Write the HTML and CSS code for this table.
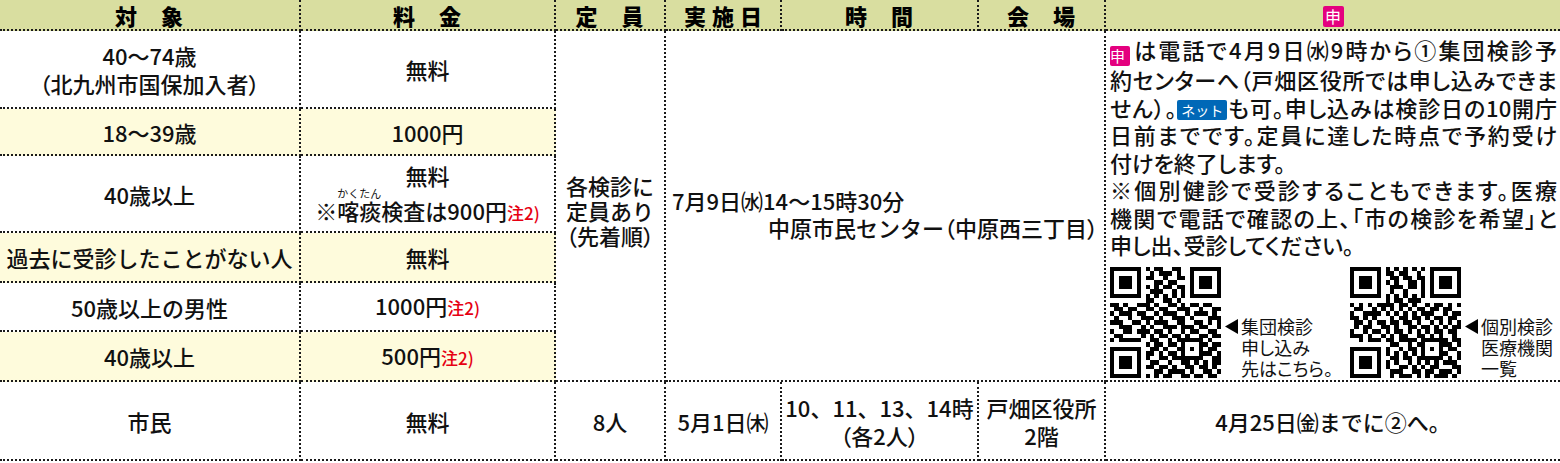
FILE: index.html
```html
<!DOCTYPE html>
<html lang="ja">
<head>
<meta charset="utf-8">
<title>検診日程</title>
<link rel="stylesheet" href="styles.css">
</head>
<body>
<div class="tbl">
  <div class="c h"><div class="t">対　象</div></div>
  <div class="c h"><div class="t">料　金</div></div>
  <div class="c h"><div class="t">定　員</div></div>
  <div class="c h wide"><div class="t">実施日</div></div>
  <div class="c h"><div class="t">時　間</div></div>
  <div class="c h"><div class="t">会　場</div></div>
  <div class="c h last"><div class="t"><span class="ic hic">申</span></div></div>

  <div class="c"><div class="t">40〜74歳<br><span class="pl">（</span>北九州市国保加入者<span class="pl">）</span></div></div>
  <div class="c"><div class="t">無料</div></div>
  <div class="c cap-cell"><div class="t">各検診に<br>定員あり<br><span class="pl">（</span>先着順<span class="pl">）</span></div></div>
  <div class="c date-cell">
    <div class="l1">7月9日㈬14〜15時30分</div>
    <div class="l2">中原市民センター<span class="pl">（</span>中原西三丁目<span class="pl">）</span></div>
  </div>
  <div class="c last info">
    <div class="j"><span class="ic">申</span>は電話で4月9日㈬9時から①集団検診予</div>
    <div class="j">約センターへ（戸畑区役所では申し込みできま</div>
    <div class="j">せん）。<span class="net">ネット</span>も可。申し込みは検診日の10開庁</div>
    <div class="j">日前までです。定員に達した時点で予約受け</div>
    <div>付けを終了します。</div>
    <div class="j">※個別健診で受診することもできます。医療</div>
    <div class="j">機関で電話で確認の上、「市の検診を希望」と</div>
    <div>申し出、受診してください。</div>
    <div class="qrs">
      <div class="qi qi1">
        <svg class="qr" viewBox="0 0 25 25" shape-rendering="crispEdges"><path id="qrp" d="M0 0h7v1h-7zM8 0h1v1h-1zM10 0h2v1h-2zM14 0h2v1h-2zM18 0h7v1h-7zM0 1h1v1h-1zM6 1h1v1h-1zM9 1h1v1h-1zM11 1h3v1h-3zM15 1h1v1h-1zM18 1h1v1h-1zM24 1h1v1h-1zM0 2h1v1h-1zM2 2h3v1h-3zM6 2h1v1h-1zM8 2h2v1h-2zM12 2h1v1h-1zM15 2h2v1h-2zM18 2h1v1h-1zM20 2h3v1h-3zM24 2h1v1h-1zM0 3h1v1h-1zM2 3h3v1h-3zM6 3h1v1h-1zM10 3h2v1h-2zM13 3h2v1h-2zM18 3h1v1h-1zM20 3h3v1h-3zM24 3h1v1h-1zM0 4h1v1h-1zM2 4h3v1h-3zM6 4h1v1h-1zM8 4h1v1h-1zM10 4h1v1h-1zM12 4h2v1h-2zM15 4h2v1h-2zM18 4h1v1h-1zM20 4h3v1h-3zM24 4h1v1h-1zM0 5h1v1h-1zM6 5h1v1h-1zM9 5h3v1h-3zM14 5h1v1h-1zM16 5h1v1h-1zM18 5h1v1h-1zM24 5h1v1h-1zM0 6h7v1h-7zM8 6h1v1h-1zM10 6h1v1h-1zM12 6h1v1h-1zM14 6h1v1h-1zM16 6h1v1h-1zM18 6h7v1h-7zM8 7h2v1h-2zM12 7h2v1h-2zM15 7h1v1h-1zM0 8h2v1h-2zM3 8h1v1h-1zM6 8h3v1h-3zM10 8h1v1h-1zM13 8h2v1h-2zM16 8h1v1h-1zM18 8h2v1h-2zM21 8h2v1h-2zM1 9h2v1h-2zM4 9h2v1h-2zM8 9h2v1h-2zM11 9h2v1h-2zM15 9h3v1h-3zM20 9h1v1h-1zM23 9h2v1h-2zM0 10h1v1h-1zM2 10h3v1h-3zM6 10h2v1h-2zM10 10h1v1h-1zM12 10h3v1h-3zM17 10h1v1h-1zM19 10h3v1h-3zM23 10h1v1h-1zM1 11h1v1h-1zM4 11h1v1h-1zM7 11h3v1h-3zM11 11h1v1h-1zM14 11h3v1h-3zM18 11h1v1h-1zM22 11h3v1h-3zM0 12h3v1h-3zM5 12h2v1h-2zM8 12h1v1h-1zM10 12h3v1h-3zM15 12h2v1h-2zM19 12h2v1h-2zM22 12h1v1h-1zM24 12h1v1h-1zM2 13h3v1h-3zM7 13h1v1h-1zM9 13h1v1h-1zM12 13h3v1h-3zM16 13h3v1h-3zM20 13h2v1h-2zM24 13h1v1h-1zM0 14h1v1h-1zM3 14h2v1h-2zM6 14h3v1h-3zM10 14h2v1h-2zM13 14h1v1h-1zM16 14h1v1h-1zM18 14h2v1h-2zM22 14h2v1h-2zM1 15h2v1h-2zM7 15h1v1h-1zM9 15h1v1h-1zM11 15h2v1h-2zM14 15h2v1h-2zM17 15h1v1h-1zM20 15h2v1h-2zM23 15h2v1h-2zM0 16h1v1h-1zM2 16h5v1h-5zM9 16h2v1h-2zM13 16h1v1h-1zM15 16h6v1h-6zM22 16h1v1h-1zM8 17h1v1h-1zM10 17h2v1h-2zM13 17h2v1h-2zM16 17h1v1h-1zM20 17h2v1h-2zM23 17h2v1h-2zM0 18h7v1h-7zM9 18h2v1h-2zM12 18h1v1h-1zM15 18h2v1h-2zM18 18h1v1h-1zM20 18h1v1h-1zM22 18h2v1h-2zM0 19h1v1h-1zM6 19h1v1h-1zM8 19h2v1h-2zM11 19h1v1h-1zM13 19h2v1h-2zM16 19h1v1h-1zM20 19h3v1h-3zM24 19h1v1h-1zM0 20h1v1h-1zM2 20h3v1h-3zM6 20h1v1h-1zM8 20h1v1h-1zM11 20h2v1h-2zM14 20h7v1h-7zM23 20h2v1h-2zM0 21h1v1h-1zM2 21h3v1h-3zM6 21h1v1h-1zM9 21h2v1h-2zM13 21h1v1h-1zM16 21h2v1h-2zM19 21h1v1h-1zM21 21h1v1h-1zM23 21h2v1h-2zM0 22h1v1h-1zM2 22h3v1h-3zM6 22h1v1h-1zM8 22h2v1h-2zM11 22h2v1h-2zM14 22h1v1h-1zM17 22h2v1h-2zM20 22h2v1h-2zM23 22h1v1h-1zM0 23h1v1h-1zM6 23h1v1h-1zM10 23h2v1h-2zM13 23h4v1h-4zM18 23h1v1h-1zM21 23h2v1h-2zM24 23h1v1h-1zM0 24h7v1h-7zM8 24h1v1h-1zM10 24h1v1h-1zM12 24h2v1h-2zM16 24h2v1h-2zM19 24h2v1h-2zM22 24h2v1h-2z"/></svg>
        <div class="cap"><svg class="tri" viewBox="0 0 13 15"><polygon points="13,0 13,15 0,7.5"/></svg><div>集団検診<br>申し込み<br>先はこちら。</div></div>
      </div>
      <div class="qi">
        <svg class="qr" viewBox="0 0 25 25" shape-rendering="crispEdges"><use href="#qrp" transform="matrix(0 1 1 0 0 0)"/></svg>
        <div class="cap"><svg class="tri" viewBox="0 0 13 15"><polygon points="13,0 13,15 0,7.5"/></svg><div>個別検診<br>医療機関<br>一覧</div></div>
      </div>
    </div>
  </div>

  <div class="c y"><div class="t">18〜39歳</div></div>
  <div class="c y"><div class="t">1000円</div></div>

  <div class="c"><div class="t">40歳以上</div></div>
  <div class="c"><div class="t">無料<br>※<ruby>喀痰<rt>かくたん</rt></ruby>検査は900円<span class="red">注2)</span></div></div>

  <div class="c y"><div class="t">過去に受診したことがない人</div></div>
  <div class="c y"><div class="t">無料</div></div>

  <div class="c"><div class="t">50歳以上の男性</div></div>
  <div class="c"><div class="t">1000円<span class="red">注2)</span></div></div>

  <div class="c y"><div class="t">40歳以上</div></div>
  <div class="c y"><div class="t">500円<span class="red">注2)</span></div></div>

  <div class="c"><div class="t">市民</div></div>
  <div class="c"><div class="t">無料</div></div>
  <div class="c"><div class="t">8人</div></div>
  <div class="c"><div class="t">5月1日㈭</div></div>
  <div class="c"><div class="t">10、11、13、14時<br><span class="pl">（</span>各2人<span class="pl">）</span></div></div>
  <div class="c"><div class="t">戸畑区役所<br>2階</div></div>
  <div class="c last"><div class="t">4月25日㈮までに②へ。</div></div>
</div>
</body>
</html>
```

FILE: styles.css
```css
* {
  box-sizing: border-box;
  margin: 0;
  padding: 0;
}

body {
  width: 1560px;
  height: 463px;
  overflow: hidden;
  background: #ffffff;
  color: #111111;
  font-family: "Noto Sans CJK JP", "Noto Sans", sans-serif;
  font-size: 22px;
  font-weight: 500;
}

.tbl {
  display: grid;
  grid-template-columns: 301px 255px 110px 116px 197px 127px 454px;
  grid-template-rows: 31px 78px 47px 77px 50px 49px 50px 79px;
}

.c {
  display: flex;
  flex-direction: column;
  align-items: center;
  justify-content: center;
  text-align: center;
  line-height: 28px;
  border-right: 2px dotted #1a1a1a;
  border-bottom: 2px dotted #1a1a1a;
  white-space: nowrap;
}

.last {
  border-right: none;
}

.h {
  background: #d9dea0;
  font-weight: 900;
  font-size: 22px;
  line-height: 1;
  letter-spacing: 1px;
  color: #000;
}

.h.wide {
  letter-spacing: 6px;
  padding-left: 6px;
}

.y {
  background: #fefbdc;
}

.pl {
  font-feature-settings: "palt";
}

.red {
  color: #e60012;
  font-size: 17px;
}

rt {
  font-size: 11px;
  font-weight: 400;
}

.cap-cell {
  grid-column: 3;
  grid-row: 2 / 8;
  line-height: 25px;
  padding-top: 9px;
}

.date-cell {
  grid-column: 4 / 7;
  grid-row: 2 / 8;
  align-items: stretch;
  line-height: 27px;
  padding: 16px 6px 0 6px;
}

.date-cell .l1 {
  text-align: left;
}

.date-cell .l2 {
  text-align: right;
}

.info {
  grid-column: 7;
  grid-row: 2 / 8;
  align-items: stretch;
  justify-content: flex-start;
  text-align: left;
  line-height: 27.5px;
  padding: 5px 3px 2px 4px;
  font-feature-settings: "palt";
}

.info .j {
  text-align: justify;
  text-align-last: justify;
}

.ic {
  display: inline-block;
  width: 20px;
  height: 20px;
  border-radius: 2px;
  background: #e4007f;
  color: #ffffff;
  font-size: 15px;
  font-weight: 400;
  line-height: 20px;
  text-align: center;
  letter-spacing: 0;
  vertical-align: -3px;
  font-feature-settings: normal;
}

.hic {
  width: 21px;
  height: 21px;
  line-height: 21px;
  font-size: 16px;
  vertical-align: middle;
}

.info .ic {
  margin-right: 2px;
}

.net {
  display: inline-block;
  height: 20px;
  padding: 0 4px;
  border-radius: 2px;
  background: #0068b7;
  color: #ffffff;
  font-size: 14px;
  font-weight: 400;
  line-height: 20px;
  vertical-align: 1px;
  font-feature-settings: normal;
}

.qrs {
  margin-top: auto;
  display: flex;
}

.qi {
  display: flex;
  align-items: flex-end;
}

.qi1 {
  width: 240px;
}

.qr {
  width: 111px;
  height: 111px;
  display: block;
  fill: #000;
}

.cap {
  display: flex;
  align-items: flex-start;
  margin-left: 4px;
  margin-bottom: -1px;
  font-size: 18px;
  font-weight: 400;
  line-height: 21px;
}

.tri {
  width: 13px;
  height: 15px;
  margin-top: 3px;
  margin-right: 3px;
  fill: #000;
  flex: none;
}
```
